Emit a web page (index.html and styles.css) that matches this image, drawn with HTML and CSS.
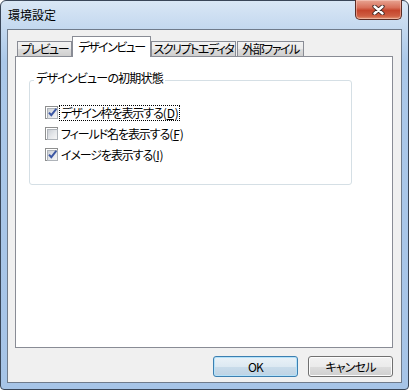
FILE: index.html
```html
<!DOCTYPE html>
<html lang="ja">
<head>
    <meta charset="UTF-8">
    <meta name="viewport" content="width=device-width, initial-scale=1.0">
    <title>環境設定</title>
    <link rel="stylesheet" href="styles.css">
</head>
<body>
    <div class="window">
        <div class="titlebar">
            <span class="window-title">環境設定</span>
            <button class="close-btn" aria-label="閉じる">
                <svg width="13" height="10" viewBox="0 0 13 10">
                    <path d="M2.5 1.5 L10.5 8.5 M10.5 1.5 L2.5 8.5" stroke="#3a2320" stroke-width="4.2" stroke-linecap="round"/>
                    <path d="M2.5 1.5 L10.5 8.5 M10.5 1.5 L2.5 8.5" stroke="#ffffff" stroke-width="2.4" stroke-linecap="round"/>
                </svg>
            </button>
        </div>

        <div class="client">
            <div class="tabs">
                <div class="tab tab-preview">プレビュー</div>
                <div class="tab tab-design active">デザインビュー</div>
                <div class="tab tab-script">スクリプトエディタ</div>
                <div class="tab tab-files">外部ファイル</div>
            </div>

            <div class="tab-panel">
                <fieldset class="group">
                    <legend class="group-title">デザインビューの初期状態</legend>
                    <div class="check-list">
                        <label class="check-row">
                            <span class="checkbox checked"></span>
                            <span class="check-label focused">デザイン枠を表示する(<u>D</u>)</span>
                        </label>
                        <label class="check-row">
                            <span class="checkbox"></span>
                            <span class="check-label">フィールド名を表示する(<u>F</u>)</span>
                        </label>
                        <label class="check-row">
                            <span class="checkbox checked"></span>
                            <span class="check-label">イメージを表示する(<u>I</u>)</span>
                        </label>
                    </div>
                </fieldset>
            </div>

            <div class="dialog-actions">
                <button class="dlg-btn default">OK</button>
                <button class="dlg-btn">キャンセル</button>
            </div>
        </div>
    </div>
</body>
</html>
```

FILE: styles.css
```css
* {
    box-sizing: border-box;
}

body {
    margin: 0;
    background-color: #ffffff;
    font-family: "Noto Sans CJK JP", sans-serif;
    font-size: 12px;
    font-feature-settings: "palt";
    letter-spacing: -0.8px;
    color: #000;
}

.window {
    width: 409px;
    height: 390px;
    display: flex;
    flex-direction: column;
    padding: 0 6px 6px 6px;
    border: 1px solid #394658;
    border-radius: 6px 6px 4px 4px;
    background: linear-gradient(to bottom, #d9e7f5 0, #c3d8ef 28px, #abc8e9 60px, #a6c4e7 100%);
}

.titlebar {
    height: 28px;
    display: flex;
    align-items: center;
    justify-content: space-between;
}

.window-title {
    padding-left: 1px;
    line-height: 14px;
    letter-spacing: 0;
    color: #000;
}

.close-btn {
    align-self: flex-start;
    width: 47px;
    height: 20px;
    margin-top: -1px;
    padding: 0;
    display: flex;
    align-items: center;
    justify-content: center;
    border: 1px solid #5b2c24;
    border-top: none;
    border-radius: 0 0 5px 5px;
    background: linear-gradient(to bottom, #e8a593 0, #d8705a 40%, #c5452c 55%, #cf5f43 85%, #e59a78 100%);
    box-shadow: inset 0 0 0 1px rgba(255, 220, 210, 0.45);
}

.client {
    flex: 1;
    display: flex;
    flex-direction: column;
    padding: 6px 8px 0 7px;
    background-color: #f0f0f0;
    border: 1px solid #6f7b8b;
}

.tabs {
    height: 20px;
    display: flex;
    align-items: flex-end;
    padding-left: 2px;
    position: relative;
    z-index: 1;
}

.tab {
    height: 15px;
    padding: 0;
    line-height: 13px;
    text-align: center;
    white-space: nowrap;
    letter-spacing: -1.5px;
    border: 1px solid #898c95;
    border-bottom: none;
    background: linear-gradient(to bottom, #f3f3f3 0, #ebebeb 50%, #dddddd 50%, #cfcfcf 100%);
}

.tab.active {
    height: 21px;
    margin-bottom: -1px;
    line-height: 19px;
    background: #ffffff;
}

.tab-preview { width: 55px; }
.tab-design { width: 79px; }
.tab-script { width: 85px; }
.tab-files { width: 67px; margin-left: 1px; }

.tab-panel {
    flex: 1;
    padding: 14px 0 0 13px;
    background-color: #ffffff;
    border: 1px solid #898c95;
}

.group {
    width: 323px;
    margin: 0;
    padding: 0;
    border: 1px solid #d5dfe5;
    border-radius: 3px;
}

.group-title {
    margin-left: 4px;
    padding: 0 2px 4px 2px;
    line-height: 14px;
    color: #000;
}

.check-list {
    display: flex;
    flex-direction: column;
    padding: 13px 0 19px 15px;
}

.check-row {
    height: 21px;
    display: flex;
    align-items: center;
    gap: 1px;
}

.checkbox {
    width: 13px;
    height: 13px;
    position: relative;
    border: 1px solid #8e8f8f;
    background: #ffffff;
}

.checkbox::before {
    content: "";
    position: absolute;
    left: 1px;
    top: 1px;
    width: 9px;
    height: 9px;
    border: 1px solid #aeb3b9;
    background: linear-gradient(135deg, #cbcfd5 0, #e4e6e9 50%, #f6f6f6 100%);
}

.checkbox.checked::after {
    content: "";
    position: absolute;
    left: 2px;
    top: 1px;
    width: 9px;
    height: 9px;
    background: url("data:image/svg+xml;utf8,<svg xmlns='http://www.w3.org/2000/svg' width='9' height='9' viewBox='0 0 9 9'><path d='M1 4.6 L3.3 7.2 L8.3 0.8' fill='none' stroke='%233c57a4' stroke-width='2'/></svg>") no-repeat;
}

.check-label {
    padding: 0 1px;
    line-height: 14px;
    letter-spacing: -1.1px;
    border: 1px dotted transparent;
}

.check-label u {
    padding: 0 1px;
}

.check-label.focused {
    border-color: #000;
}

.dialog-actions {
    height: 34px;
    display: flex;
    justify-content: flex-end;
    align-items: flex-start;
    gap: 10px;
    padding-top: 8px;
}

.dlg-btn {
    width: 85px;
    height: 21px;
    padding: 0;
    font-family: inherit;
    font-size: 12px;
    font-feature-settings: "palt";
    letter-spacing: -0.8px;
    color: #000;
    border: 1px solid #707070;
    border-radius: 3px;
    background: linear-gradient(to bottom, #f2f2f2 0, #ebebeb 50%, #dddddd 50%, #cfcfcf 100%);
    box-shadow: inset 0 0 0 1px #fcfcfc;
}

.dlg-btn.default {
    border-color: #3c7fb1;
    background: linear-gradient(to bottom, #eaf2f8 0, #dde9f2 50%, #c9dceb 50%, #bed3e4 100%);
    box-shadow: inset 0 0 0 1px #b5e2f9;
}
```
